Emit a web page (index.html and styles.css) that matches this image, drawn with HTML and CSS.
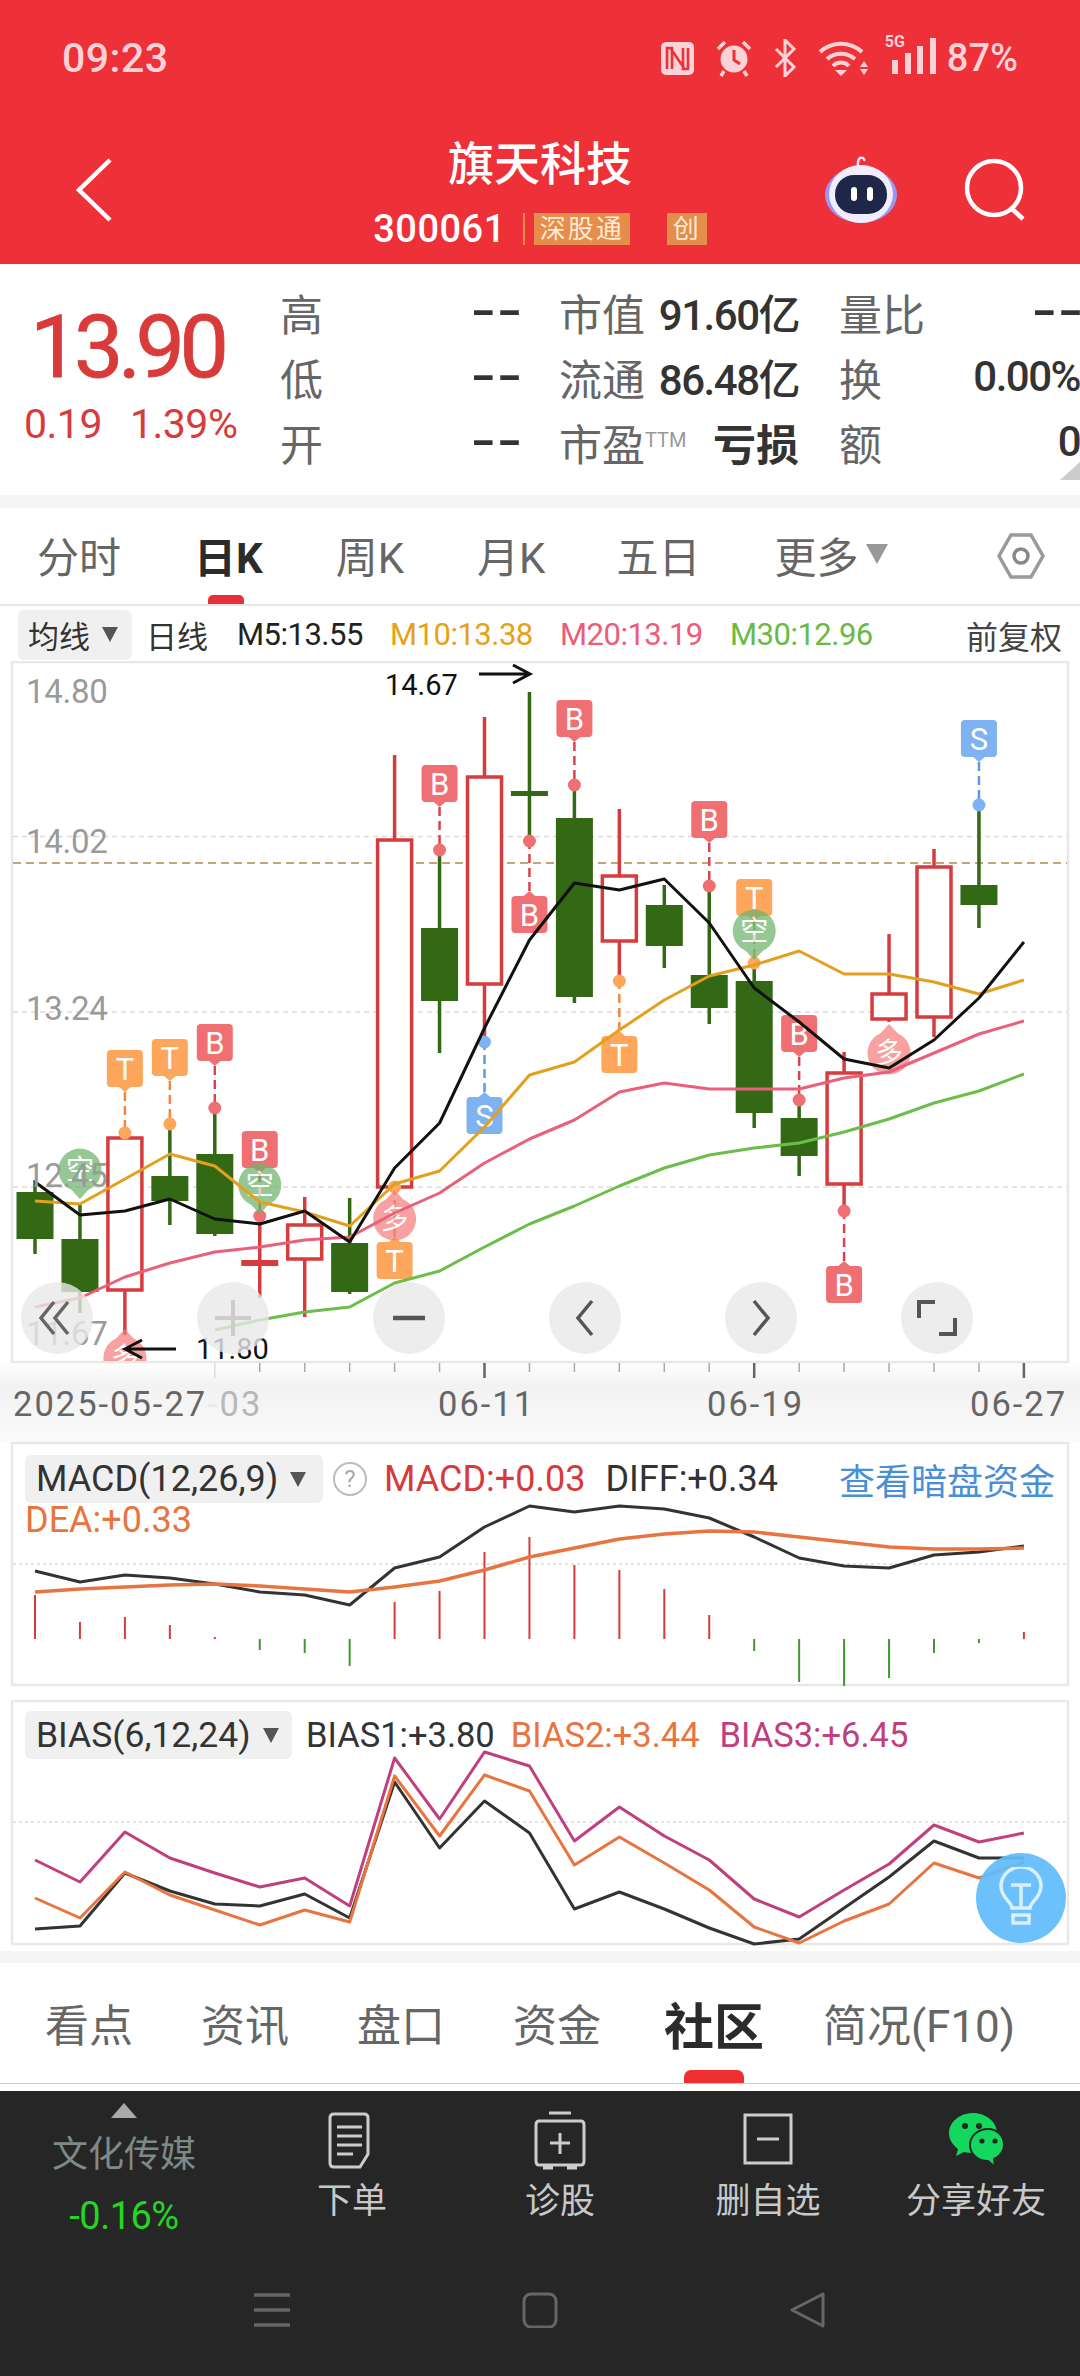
FILE: index.html
```html
<!DOCTYPE html>
<html lang="zh-CN">
<head>
  <meta charset="UTF-8">
  <meta name="viewport" content="width=device-width, initial-scale=1.0">
  <title>旗天科技</title>
  <link rel="stylesheet" href="styles.css">
</head>
<body>

  <header class="top">
    <div class="status-bar">
      <span class="clock">09:23</span>
      <div class="status-icons">
        <svg width="35" height="35" viewBox="0 0 35 35"><rect x="1" y="1" width="33" height="33" rx="5" fill="#fbd3d6"/><path d="M7 28V7l5 0v21M28 7v21h-5V7M11 8l13 19" fill="none" stroke="#ee3039" stroke-width="2.6"/></svg>
        <svg width="38" height="38" viewBox="0 0 38 38"><circle cx="19" cy="20" r="13.5" fill="#fbd3d6"/><path d="M19 11v10l6 4" fill="none" stroke="#ee3039" stroke-width="3"/><path d="M3 10l7-7M35 10l-7-7M9 32l-3 5M29 32l3 5" stroke="#fbd3d6" stroke-width="3.5"/></svg>
        <svg width="24" height="38" viewBox="0 0 24 38"><path d="M3 10l18 18-9 9V1l9 9L3 28" fill="none" stroke="#fbd3d6" stroke-width="3"/></svg>
        <svg width="52" height="38" viewBox="0 0 52 38"><path d="M3 13a31 31 0 0 1 42 0M10 20a21 21 0 0 1 28 0M16 27a11 11 0 0 1 16 0" fill="none" stroke="#fbd3d6" stroke-width="4"/><path d="M24 37l-6-6h12zM47 22l4 6h-8zM47 36l4-6h-8z" fill="#fbd3d6"/></svg>
        <div class="signal">
          <span class="net">5G</span>
          <svg width="46" height="36" viewBox="0 0 46 36"><path d="M1 22h6v14H1zM14 15h6v21h-6zM26 8h6v28h-6zM39 0h6v36h-6z" fill="#fbd3d6"/></svg>
        </div>
        <span class="battery">87%</span>
      </div>
    </div>
    <div class="nav-bar">
      <svg class="back" width="40" height="66" viewBox="0 0 40 66"><path d="M35 3L4 33l31 30" fill="none" stroke="#fff" stroke-width="4.5"/></svg>
      <div class="stock-title">
        <h1>旗天科技</h1>
        <div class="stock-code">
          <span>300061</span>
          <i class="code-line"></i>
          <b class="tag">深股通</b>
          <b class="tag tag-chuang">创</b>
        </div>
      </div>
      <div class="nav-right">
        <svg width="74" height="68" viewBox="0 0 74 68">
          <path d="M34 12c0-5-1-8 2-10 3-1 5 1 4 3" fill="none" stroke="#e6e2fb" stroke-width="2.5"/>
          <ellipse cx="37" cy="39" rx="36" ry="28" fill="#9a96f2"/>
          <ellipse cx="37" cy="38" rx="32" ry="29" fill="#f0eefd"/>
          <rect x="11" y="19" width="52" height="39" rx="19" fill="#1e2748"/>
          <rect x="27" y="31" width="6" height="14" rx="3" fill="#fff"/>
          <rect x="43" y="31" width="6" height="14" rx="3" fill="#fff"/>
        </svg>
        <svg width="64" height="64" viewBox="0 0 64 64"><circle cx="30" cy="30" r="27" fill="none" stroke="#fff" stroke-width="4.5"/><path d="M47 50l12 11" stroke="#fff" stroke-width="4.5"/></svg>
      </div>
    </div>
  </header>

  <section class="quote">
    <div class="price-box">
      <div class="price">13.90</div>
      <div class="change"><span>0.19</span><span>1.39%</span></div>
    </div>
    <div class="quote-grid">
      <div class="cell"><span class="lbl">高</span><span class="val dash">--</span></div>
      <div class="cell"><span class="lbl">市值</span><span class="val">91.60亿</span></div>
      <div class="cell"><span class="lbl">量比</span><span class="val dash">--</span></div>
      <div class="cell"><span class="lbl">低</span><span class="val dash">--</span></div>
      <div class="cell"><span class="lbl">流通</span><span class="val">86.48亿</span></div>
      <div class="cell"><span class="lbl">换</span><span class="val">0.00%</span></div>
      <div class="cell"><span class="lbl">开</span><span class="val dash">--</span></div>
      <div class="cell"><span class="lbl">市盈<sup class="ttm">TTM</sup></span><span class="val strong">亏损</span></div>
      <div class="cell"><span class="lbl">额</span><span class="val">0</span></div>
    </div>
    <i class="corner"></i>
  </section>

  <nav class="period-tabs">
    <a class="p1">分时</a>
    <a class="p2 active">日K</a>
    <a class="p3">周K</a>
    <a class="p4">月K</a>
    <a class="p5">五日</a>
    <a class="p6">更多<i class="caret-big"></i></a>
    <svg class="hex" width="48" height="48" viewBox="0 0 48 48"><path d="M14 3h20l12 21-12 21H14L2 24z" fill="none" stroke="#999" stroke-width="3.5"/><circle cx="24" cy="24" r="7" fill="none" stroke="#888" stroke-width="3.5"/></svg>
  </nav>

  <div class="ma-row">
    <span class="chip">均线<i class="caret"></i></span>
    <span class="ma-type">日线</span>
    <span class="ma m5">M5:13.55</span>
    <span class="ma m10">M10:13.38</span>
    <span class="ma m20">M20:13.19</span>
    <span class="ma m30">M30:12.96</span>
    <span class="adjust">前复权</span>
  </div>

  <section class="kline">
    <svg id="klineChart" width="1080" height="779" viewBox="0 661 1080 779"></svg>
    <div class="chart-buttons">
      <span class="round-btn"><svg width="44" height="44" viewBox="0 0 44 44"><path d="M19 6L6 22l13 16M33 6L20 22l13 16" fill="none" stroke="#666" stroke-width="3.5"/></svg></span>
      <span class="round-btn"><svg width="36" height="36" viewBox="0 0 36 36"><path d="M0 18h36M18 0v36" stroke="#ccc" stroke-width="4"/></svg></span>
      <span class="round-btn"><svg width="36" height="36" viewBox="0 0 36 36"><path d="M2 18h32" stroke="#555" stroke-width="4.5"/></svg></span>
      <span class="round-btn"><svg width="36" height="40" viewBox="0 0 36 40"><path d="M25 3L11 20l14 17" fill="none" stroke="#555" stroke-width="3.5"/></svg></span>
      <span class="round-btn"><svg width="36" height="40" viewBox="0 0 36 40"><path d="M11 3l14 17-14 17" fill="none" stroke="#555" stroke-width="3.5"/></svg></span>
      <span class="round-btn"><svg width="42" height="42" viewBox="0 0 42 42"><path d="M3 21V5h16M39 21v16H23" fill="none" stroke="#555" stroke-width="4"/></svg></span>
    </div>
  </section>

  <section class="panel macd">
    <svg id="macdChart" width="1080" height="246" viewBox="0 1442 1080 246"></svg>
    <div class="legend">
      <span class="chip chip-macd">MACD(12,26,9)<i class="caret"></i></span>
      <span class="help">?</span>
      <span class="red">MACD:+0.03</span>
      <span class="dark">DIFF:+0.34</span>
      <a class="dark-pool">查看暗盘资金</a>
      <span class="orange dea">DEA:+0.33</span>
    </div>
  </section>

  <section class="panel bias">
    <svg id="biasChart" width="1080" height="246" viewBox="0 1700 1080 246"></svg>
    <div class="legend legend-bias">
      <span class="chip chip-bias">BIAS(6,12,24)<i class="caret"></i></span>
      <span class="dark">BIAS1:+3.80</span>
      <span class="orange">BIAS2:+3.44</span>
      <span class="plum">BIAS3:+6.45</span>
    </div>
    <span class="bulb"><svg width="46" height="62" viewBox="0 0 46 62"><path d="M14 41c0-6-11-10-11-22a20 19 0 0 1 40 0c0 12-11 16-11 22zM13 18h20M23 18v23M15 48h16v8H15z" fill="none" stroke="#d8f0ff" stroke-width="3.5"/></svg></span>
  </section>

  <nav class="info-tabs">
    <a>看点</a>
    <a>资讯</a>
    <a>盘口</a>
    <a>资金</a>
    <a class="active">社区</a>
    <a>简况(F10)</a>
  </nav>

  <footer class="bottom">
    <div class="actions">
      <div class="sector">
        <i class="sector-up"></i>
        <span class="sector-name">文化传媒</span>
        <span class="sector-pct">-0.16%</span>
      </div>
      <a class="action">
        <svg width="60" height="60" viewBox="0 0 60 60"><path d="M12 4h30q4 0 4 4v36l-8 13H12q-4 0-4-4V8q0-4 4-4zM15 17h25M15 26h25M15 35h25M15 44h16" fill="none" stroke="#ccc" stroke-width="3"/></svg>
        <span>下单</span>
      </a>
      <a class="action">
        <svg width="60" height="60" viewBox="0 0 60 60"><path d="M19 3h22M9 11h42q3 0 3 4v36q0 4-3 4H9q-3 0-3-4V15q0-4 3-4zM30 23v21M20 33h20M13 58h10M37 58h10" fill="none" stroke="#ccc" stroke-width="3"/></svg>
        <span>诊股</span>
      </a>
      <a class="action">
        <svg width="60" height="60" viewBox="0 0 60 60"><path d="M7 5h46v48H7zM19 29h22" fill="none" stroke="#ccc" stroke-width="3"/></svg>
        <span>删自选</span>
      </a>
      <a class="action">
        <svg width="60" height="60" viewBox="0 0 60 60">
          <path d="M27 3C14 3 3 12 3 23c0 7 4 12 9 16l-2 7 8-4q4 1 9 1c13 0 24-9 24-20S40 3 27 3z" fill="#14d85e"/>
          <path d="M42 19c-10 0-18 7-18 16s8 16 18 16l7 6-1-8c6-3 10-8 10-14 0-9-7-16-16-16z" fill="#14d85e" stroke="#262626" stroke-width="2"/>
          <circle cx="19" cy="16" r="3" fill="#262626"/><circle cx="33" cy="16" r="3" fill="#262626"/>
          <circle cx="36" cy="31" r="2.6" fill="#262626"/><circle cx="49" cy="31" r="2.6" fill="#262626"/>
        </svg>
        <span>分享好友</span>
      </a>
    </div>
    <div class="system-nav">
      <svg width="36" height="36" viewBox="0 0 36 36"><path d="M0 3h36M0 18h36M0 33h36" stroke="#666" stroke-width="3.5"/></svg>
      <svg width="36" height="36" viewBox="0 0 36 36"><rect x="2" y="2" width="32" height="33" rx="7" fill="none" stroke="#666" stroke-width="3"/></svg>
      <svg width="36" height="36" viewBox="0 0 36 36"><path d="M33 2v32L2 18z" fill="none" stroke="#666" stroke-width="3" stroke-linejoin="round"/></svg>
    </div>
  </footer>

  <script src="chart.js"></script>
</body>
</html>
```

FILE: styles.css
```css
* {
  box-sizing: border-box;
}
body {
  width: 1080px;
  height: 2376px;
  margin: 0;
  overflow: hidden;
  font-family: Roboto, "Noto Sans CJK SC", sans-serif;
  background: #fff;
  color: #333;
}
i {
  font-style: normal;
}

/* red header */
.top {
  height: 264px;
  background: #ee3039;
  color: #fff;
}
.status-bar {
  height: 116px;
  padding: 0 62px;
  display: flex;
  align-items: center;
  justify-content: space-between;
  color: #fbd3d6;
}
.clock {
  font-size: 41px;
  font-weight: 500;
  letter-spacing: 0.5px;
}
.status-icons {
  display: flex;
  align-items: center;
  gap: 20px;
}
.signal {
  position: relative;
  width: 46px;
  margin-left: 2px;
  margin-right: -10px;
}
.net {
  position: absolute;
  left: -6px;
  top: -6px;
  font-size: 16px;
  font-weight: 700;
}
.battery {
  font-size: 38px;
  font-weight: 500;
}
.nav-bar {
  height: 148px;
  padding: 0 52px;
  display: grid;
  grid-template-columns: 1fr auto 1fr;
  align-items: center;
}
.back {
  margin-left: 23px;
}
.stock-title {
  display: flex;
  flex-direction: column;
  align-items: center;
}
.stock-title h1 {
  margin: 0;
  font-size: 46px;
  line-height: 62px;
  font-weight: 500;
}
.stock-code {
  display: flex;
  align-items: center;
  height: 38px;
  font-size: 38px;
  font-weight: 500;
  letter-spacing: 0.5px;
  margin-top: 15px;
}
.code-line {
  width: 2px;
  height: 32px;
  margin: 0 9px 0 17px;
  background: #e58d4a;
}
.tag {
  height: 32px;
  padding: 0 6px;
  background: #e58d4a;
  color: #ffe9d6;
  font-size: 26px;
  line-height: 32px;
  font-weight: 400;
  letter-spacing: 2px;
}
.tag-chuang {
  margin-left: 37px;
}
.nav-right {
  display: flex;
  align-items: center;
  justify-content: flex-end;
  gap: 66px;
}

/* quote block */
.quote {
  position: relative;
  height: 244px;
  display: flex;
  border-bottom: 13px solid #f5f5f5;
}
.price-box {
  width: 283px;
  padding: 38px 0 0 30px;
  color: #d93a3a;
}
.price {
  font-size: 88px;
  line-height: 90px;
  -webkit-text-stroke: 0.8px #d93a3a;
  letter-spacing: -5.5px;
}
.change {
  display: flex;
  gap: 28px;
  margin: 10px 0 0 -6px;
  font-size: 41px;
  line-height: 44px;
  letter-spacing: -0.5px;
}
.quote-grid {
  flex: 1;
  display: grid;
  grid-template-columns: 239px 240px 241px;
  column-gap: 40px;
  grid-template-rows: repeat(3, 65px);
  padding-top: 15px;
}
.cell {
  display: flex;
  align-items: center;
  justify-content: space-between;
  white-space: nowrap;
}
.lbl {
  font-size: 43px;
  color: #666;
}
.ttm {
  font-size: 20px;
  line-height: 0;
  vertical-align: 14px;
  color: #999;
}
.val {
  font-size: 42px;
  font-weight: 500;
  color: #333;
  letter-spacing: -1.5px;
}
.val.dash {
  font-size: 42px;
  font-weight: 700;
  letter-spacing: 0;
  margin-right: -4px;
  transform: scaleX(1.6);
  transform-origin: right center;
}
.val.strong {
  font-size: 43px;
  font-weight: 700;
  letter-spacing: 0;
}
.corner {
  position: absolute;
  right: 0;
  bottom: 15px;
  border-left: 20px solid transparent;
  border-bottom: 18px solid #ccc;
}

/* period tabs */
.period-tabs {
  position: relative;
  height: 98px;
  padding-left: 37px;
  display: flex;
  align-items: center;
  gap: 73px;
  border-bottom: 2px solid #e5e5e5;
  font-size: 42px;
  color: #666;
}
.period-tabs a {
  position: relative;
  display: flex;
  align-items: center;
  height: 96px;
  padding-bottom: 4px;
}
.period-tabs .p5 {
  margin-left: -2px;
}
.period-tabs .p6 {
  margin-left: 1px;
}
.period-tabs a.active {
  font-weight: 700;
  color: #2b2b2b;
}
.period-tabs a.active::after {
  content: "";
  position: absolute;
  left: 14px;
  bottom: 0;
  width: 36px;
  height: 9px;
  border-radius: 5px 5px 0 0;
  background: #e8303a;
}
.caret-big {
  margin-left: 8px;
  border-left: 11px solid transparent;
  border-right: 11px solid transparent;
  border-top: 20px solid #999;
}
.hex {
  margin-left: auto;
  margin-right: 35px;
}

/* moving average legend */
.ma-row {
  height: 55px;
  padding: 2px 18px 0 18px;
  display: flex;
  align-items: center;
  font-size: 31px;
  white-space: nowrap;
}
.chip {
  display: inline-flex;
  align-items: center;
  background: #f0f0f0;
  border-radius: 6px;
  color: #333;
}
.ma-row .chip {
  width: 114px;
  height: 50px;
  padding-left: 10px;
}
.caret {
  margin-left: 12px;
  border-left: 8px solid transparent;
  border-right: 8px solid transparent;
  border-top: 15px solid #555;
}
.ma-type {
  margin-left: 14px;
  width: 91px;
}
.ma {
  letter-spacing: -0.5px;
  width: 170px;
}
.m5 {
  color: #222;
  width: 153px;
}
.m10 {
  color: #e5a118;
}
.m20 {
  color: #ec5c7b;
}
.m30 {
  color: #69ba45;
}
.adjust {
  margin-left: auto;
  font-size: 32px;
  color: #444;
}

/* kline */
.kline {
  position: relative;
  height: 781px;
  background: linear-gradient(#fff 701px, #f2f2f2 725px, #fafafa 779px);
}
.kline svg {
  display: block;
}
.chart-buttons {
  position: absolute;
  left: 21px;
  top: 621px;
  width: 952px;
  display: flex;
  justify-content: space-between;
}
.round-btn {
  width: 72px;
  height: 72px;
  border-radius: 50%;
  background: rgba(232, 232, 232, 0.8);
  display: flex;
  align-items: center;
  justify-content: center;
}

/* indicator panels */
.panel {
  position: relative;
  height: 246px;
}
.panel svg {
  display: block;
}
.bias {
  margin-top: 12px;
}
.legend {
  position: absolute;
  left: 25px;
  right: 25px;
  top: 11px;
  display: flex;
  flex-wrap: wrap;
  align-items: center;
  font-size: 36px;
  white-space: nowrap;
}
.legend-bias {
  font-size: 34.5px;
}
.legend .chip {
  height: 48px;
  padding-left: 11px;
  color: #333;
  font-size: 36px;
}
.legend .chip-bias {
  font-size: 35.5px;
}
.chip-macd {
  width: 298px;
}
.chip-bias {
  width: 267px;
}
.help {
  width: 34px;
  height: 34px;
  margin: 0 17px 0 10px;
  border: 2px solid #bbb;
  border-radius: 50%;
  color: #aaa;
  font-size: 24px;
  line-height: 30px;
  text-align: center;
}
.red {
  color: #d63a3a;
  margin-right: 20px;
}
.dark {
  color: #333;
}
.orange {
  color: #e8743f;
}
.plum {
  color: #c0407f;
}
.dark-pool {
  margin-left: auto;
  color: #4a8fd6;
  font-size: 36px;
}
.dea {
  flex-basis: 100%;
  margin-top: -5px;
  font-size: 36px;
  line-height: 40px;
}
.legend-bias .dark {
  margin-left: 14px;
}
.legend-bias .orange {
  margin-left: 16px;
}
.legend-bias .plum {
  margin-left: 20px;
}
.bulb {
  position: absolute;
  left: 976px;
  top: 153px;
  width: 90px;
  height: 90px;
  border-radius: 50%;
  background: rgba(95, 188, 252, 0.92);
  display: flex;
  align-items: center;
  justify-content: center;
}

/* info tabs */
.info-tabs {
  height: 133px;
  margin-top: 5px;
  border-top: 12px solid #f5f5f5;
  border-bottom: 1px solid #ccc;
  padding-left: 45px;
  display: flex;
  align-items: center;
  gap: 68px;
  font-size: 44px;
  color: #666;
}
.info-tabs a {
  position: relative;
}
.info-tabs a.active {
  margin-left: -5px;
  margin-right: -9px;
  font-size: 50px;
  font-weight: 700;
  color: #2b2b2b;
}
.info-tabs a.active::after {
  content: "";
  position: absolute;
  left: 20px;
  right: 20px;
  bottom: -24px;
  height: 13px;
  border-radius: 7px 7px 0 0;
  background: #f03030;
}

/* bottom bar */
.bottom {
  margin-top: 7px;
  height: 285px;
  background: #262626;
}
.actions {
  display: grid;
  grid-template-columns: 248px repeat(4, 208px);
  height: 201px;
}
.sector {
  display: flex;
  flex-direction: column;
  align-items: center;
  padding-top: 12px;
}
.sector-up {
  border-left: 13px solid transparent;
  border-right: 13px solid transparent;
  border-bottom: 15px solid #aaa;
}
.sector-name {
  margin-top: 12px;
  font-size: 36px;
  line-height: 50px;
  color: #7f8a87;
}
.sector-pct {
  margin-top: 16px;
  font-size: 38px;
  line-height: 40px;
  color: #22d622;
  letter-spacing: -0.5px;
}
.action {
  display: flex;
  flex-direction: column;
  align-items: center;
  padding-top: 19px;
  color: #c8c8c8;
  font-size: 35px;
  line-height: 50px;
}
.action span {
  margin-top: 7px;
}
.system-nav {
  display: flex;
  padding: 0 0 0 254px;
  gap: 232px;
}
```

FILE: chart.js
```js
const SVG_NS = 'http://www.w3.org/2000/svg';
const X = i => 35 + 44.95 * i;

const RED = '#d63b3d';
const GREEN = '#336815';

function add(parent, tag, attrs, text) {
  const node = document.createElementNS(SVG_NS, tag);
  for (const key in attrs) node.setAttribute(key, attrs[key]);
  if (text) node.textContent = text;
  parent.appendChild(node);
  return node;
}

function line(parent, ys, color, width, start = 0) {
  const points = ys.map((y, i) => X(i + start).toFixed(1) + ',' + y).join(' ');
  add(parent, 'polyline', { points, fill: 'none', stroke: color, 'stroke-width': width, 'stroke-linejoin': 'round' });
}

function frame(parent, x, y, w, h) {
  add(parent, 'rect', { x, y, width: w, height: h, fill: '#fff', stroke: '#e8e8e8', 'stroke-width': 2.5 });
}

function hline(parent, y, color, dash, width = 1.5) {
  add(parent, 'line', { x1: 13, x2: 1067, y1: y, y2: y, stroke: color, 'stroke-dasharray': dash, 'stroke-width': width });
}

/* ---------- kline ---------- */
// color, body top, body bottom, wick top, wick bottom
const candles = [
  ['g', 1192, 1239, 1180, 1254],
  ['g', 1239, 1292, 1205, 1313],
  ['r', 1138, 1290, 1133, 1335],
  ['g', 1176, 1201, 1120, 1225],
  ['g', 1154, 1234, 1108, 1236],
  ['d', 1260, 1266, 1216, 1298],
  ['r', 1225, 1259, 1197, 1317],
  ['g', 1243, 1292, 1198, 1294],
  ['r', 840, 1187, 755, 1187],
  ['g', 928, 1001, 850, 1053],
  ['r', 777, 984, 717, 1040],
  ['e', 791, 796, 692, 841],
  ['g', 818, 997, 785, 1003],
  ['r', 876, 941, 809, 981],
  ['g', 905, 946, 885, 968],
  ['g', 975, 1008, 886, 1024],
  ['g', 981, 1113, 963, 1128],
  ['g', 1118, 1156, 1100, 1176],
  ['r', 1073, 1184, 1052, 1211],
  ['r', 994, 1019, 934, 1022],
  ['r', 867, 1017, 849, 1037],
  ['g', 885, 905, 805, 928]
];

const m5 = [1182, 1215, 1211, 1199, 1219, 1224, 1211, 1242, 1168, 1123, 1028, 940, 883, 890, 879, 923, 988, 1022, 1059, 1068, 1040, 998, 942];
const m10 = [1201, 1204, 1179, 1154, 1166, 1202, 1212, 1226, 1184, 1171, 1127, 1075, 1062, 1030, 1000, 976, 965, 951, 974, 974, 982, 994, 980];
const m20 = [1307, 1298, 1277, 1263, 1252, 1247, 1240, 1237, 1213, 1193, 1163, 1139, 1120, 1092, 1083, 1089, 1089, 1089, 1078, 1072, 1053, 1034, 1021];
const m30 = [1330, 1320, 1312, 1307, 1283, 1271, 1247, 1224, 1206, 1186, 1168, 1155, 1148, 1143, 1132, 1119, 1103, 1091, 1074];

// index, letter, box top, dot y
const flags = [
  [2, 'T', 1050, 1133], [3, 'T', 1039, 1124], [4, 'B', 1024, 1108], [5, 'B', 1131, 1216],
  [8, 'T', 1242, 1187], [9, 'B', 765, 850], [10, 'S', 1097, 1042], [11, 'B', 896, 841],
  [12, 'B', 700, 785], [13, 'T', 1036, 981], [15, 'B', 801, 886], [16, 'T', 879, 963],
  [17, 'B', 1015, 1100], [18, 'B', 1266, 1211], [21, 'S', 720, 805]
];

const FLAG_COLOR = {
  B: ['#ef6f72', '#d9434b'],
  T: ['#fda65c', '#f0883e'],
  S: ['#7eb2f0', '#5b9be6']
};

function drawCandle(g, c, i) {
  const [kind, top, bottom, wickTop, wickBottom] = c;
  const x = X(i);
  const color = kind === 'r' || kind === 'd' ? RED : GREEN;
  add(g, 'line', { x1: x, x2: x, y1: wickTop, y2: wickBottom, stroke: color, 'stroke-width': 3.5 });
  if (kind === 'r') {
    add(g, 'rect', { x: x - 17, y: top, width: 34, height: bottom - top, fill: '#fff', stroke: color, 'stroke-width': 3.5 });
  } else {
    add(g, 'rect', { x: x - 18.5, y: top, width: 37, height: bottom - top, fill: color });
  }
}

function drawFlag(g, f) {
  const [i, letter, top, dot] = f;
  const x = X(i);
  const [fill, dashColor] = FLAG_COLOR[letter];
  const below = top > dot;
  const tipY = below ? top - 5 : top + 42;
  const baseY = below ? top + 1 : top + 36;
  add(g, 'line', { x1: x, x2: x, y1: tipY, y2: dot, stroke: dashColor, 'stroke-width': 2.5, 'stroke-dasharray': '9 5' });
  add(g, 'circle', { cx: x, cy: dot, r: 6.5, fill, });
  add(g, 'rect', { x: x - 18, y: top, width: 36, height: 37, rx: 4, fill });
  add(g, 'path', { d: `M${x - 7} ${baseY}L${x} ${tipY}L${x + 7} ${baseY}z`, fill });
  add(g, 'text', { x, y: top + 30, 'text-anchor': 'middle', 'font-size': 31, fill: '#fff', 'font-family': 'Roboto' }, letter);
}

function drawBubble(g, x, cy, text, color, up) {
  const tipY = up ? cy - 29 : cy + 29;
  const bubble = add(g, 'g', { opacity: 0.72 });
  add(bubble, 'circle', { cx: x, cy, r: 21.5, fill: color });
  add(bubble, 'path', { d: `M${x - 12} ${up ? cy - 16 : cy + 16}L${x} ${tipY}L${x + 12} ${up ? cy - 16 : cy + 16}z`, fill: color });
  add(bubble, 'text', { x, y: cy + 10, 'text-anchor': 'middle', 'font-size': 28, fill: '#fff', 'font-family': 'Noto Sans CJK SC' }, text);
}

function drawKline() {
  const svg = document.getElementById('klineChart');
  const defs = add(svg, 'defs', {});
  const clip = add(defs, 'clipPath', { id: 'klineClip' });
  add(clip, 'rect', { x: 13, y: 662, width: 1054, height: 699 });

  frame(svg, 12, 662, 1056, 700);
  [836.5, 1012, 1187].forEach(y => hline(svg, y, '#dcdcdc', '5 4'));
  hline(svg, 863, '#c4a57a', '8 5', 2);

  const g = add(svg, 'g', { 'clip-path': 'url(#klineClip)' });
  candles.forEach((c, i) => drawCandle(g, c, i));
  flags.forEach(f => drawFlag(g, f));
  drawBubble(g, X(1), 1170, '空', '#6fb36b', false);
  drawBubble(g, X(5), 1185, '空', '#6fb36b', false);
  drawBubble(g, X(16), 931, '空', '#6fb36b', false);
  drawBubble(g, X(2), 1358, '多', '#f47e7e', true);
  drawBubble(g, X(8), 1219, '多', '#f47e7e', true);
  drawBubble(g, X(19), 1053, '多', '#f47e7e', true);

  line(g, m30, '#6cbd4a', 3, 4);
  line(g, m20, '#e9607a', 3);
  line(g, m10, '#e3a01f', 3);
  line(g, m5, '#111', 3);

  const axis = { fill: '#9a9a9a', 'font-size': 33, 'font-family': 'Roboto', 'letter-spacing': -0.3 };
  [['14.80', 703], ['14.02', 853], ['13.24', 1020], ['12.45', 1187], ['11.67', 1345]].forEach(([t, y]) => {
    add(svg, 'text', { x: 26, y, ...axis }, t);
  });

  const mark = { fill: '#111', 'font-size': 29, 'font-family': 'Roboto' };
  add(svg, 'text', { x: 385, y: 695, ...mark }, '14.67');
  add(svg, 'path', { d: 'M479 674h51M513 665l17 9-17 9', fill: 'none', stroke: '#111', 'stroke-width': 3 });
  add(svg, 'text', { x: 196, y: 1359, ...mark }, '11.80');
  add(svg, 'path', { d: 'M176 1349h-51M142 1340l-17 9 17 9', fill: 'none', stroke: '#111', 'stroke-width': 3 });

  // time axis
  for (let i = 4; i <= 22; i++) {
    const major = i === 10 || i === 16 || i === 22;
    add(svg, 'line', {
      x1: X(i), x2: X(i), y1: 1363, y2: major || i === 4 ? 1378 : 1372,
      stroke: major ? '#666' : i === 4 ? '#ddd' : '#aaa', 'stroke-width': major ? 2.5 : 1.5
    });
  }
  const label = { fill: '#666', 'font-size': 34.5, 'font-family': 'Roboto', 'letter-spacing': 2 };
  add(svg, 'text', { x: 13, y: 1416, ...label }, '2025-05-27');
  const faded = add(svg, 'text', { x: 208, y: 1416, ...label });
  add(faded, 'tspan', { fill: '#e8e8e8' }, '-');
  add(faded, 'tspan', { fill: '#b8b8b8' }, '03');
  add(svg, 'text', { x: 438, y: 1416, ...label }, '06-11');
  add(svg, 'text', { x: 707, y: 1416, ...label }, '06-19');
  add(svg, 'text', { x: 970, y: 1416, ...label }, '06-27');
}

/* ---------- macd ---------- */
const diff = [1571, 1582, 1575, 1578, 1584, 1592, 1595, 1605, 1568, 1557, 1527, 1506, 1512, 1506, 1509, 1518, 1537, 1558, 1566, 1568, 1555, 1552, 1546];
const dea = [1592, 1589, 1587, 1585, 1584, 1586, 1589, 1592, 1587, 1581, 1570, 1557, 1548, 1539, 1534, 1531, 1532, 1537, 1542, 1547, 1549, 1549, 1548];
const bars = [1595, 1622, 1617, 1625, 1637, 1650, 1653, 1666, 1602, 1591, 1552, 1537, 1565, 1570, 1589, 1615, 1651, 1682, 1686, 1678, 1653, 1643, 1632];

function drawMacd() {
  const svg = document.getElementById('macdChart');
  frame(svg, 12, 1443, 1056, 242);
  hline(svg, 1564, '#dcdcdc', '3 3');
  bars.forEach((y, i) => {
    add(svg, 'line', { x1: X(i), x2: X(i), y1: 1639, y2: y, stroke: y > 1639 ? '#3d9a2c' : '#d63a3a', 'stroke-width': 2 });
  });
  line(svg, diff, '#333', 3);
  line(svg, dea, '#e8743f', 3.5);
}

/* ---------- bias ---------- */
const bias1 = [1929, 1926, 1873, 1891, 1904, 1906, 1894, 1918, 1782, 1848, 1801, 1833, 1909, 1892, 1909, 1928, 1944, 1939, 1908, 1877, 1841, 1858, 1858];
const bias2 = [1898, 1918, 1872, 1895, 1910, 1925, 1910, 1922, 1776, 1836, 1775, 1791, 1865, 1837, 1863, 1890, 1927, 1943, 1921, 1904, 1863, 1878, 1862];
const bias3 = [1860, 1882, 1832, 1858, 1873, 1887, 1878, 1906, 1758, 1819, 1752, 1766, 1841, 1807, 1836, 1860, 1899, 1917, 1890, 1864, 1825, 1842, 1833];

function drawBias() {
  const svg = document.getElementById('biasChart');
  frame(svg, 12, 1701, 1056, 243);
  hline(svg, 1822, '#dcdcdc', '3 3');
  line(svg, bias1, '#333', 3);
  line(svg, bias2, '#e8743f', 3);
  line(svg, bias3, '#c0407f', 3);
}

drawKline();
drawMacd();
drawBias();
```
